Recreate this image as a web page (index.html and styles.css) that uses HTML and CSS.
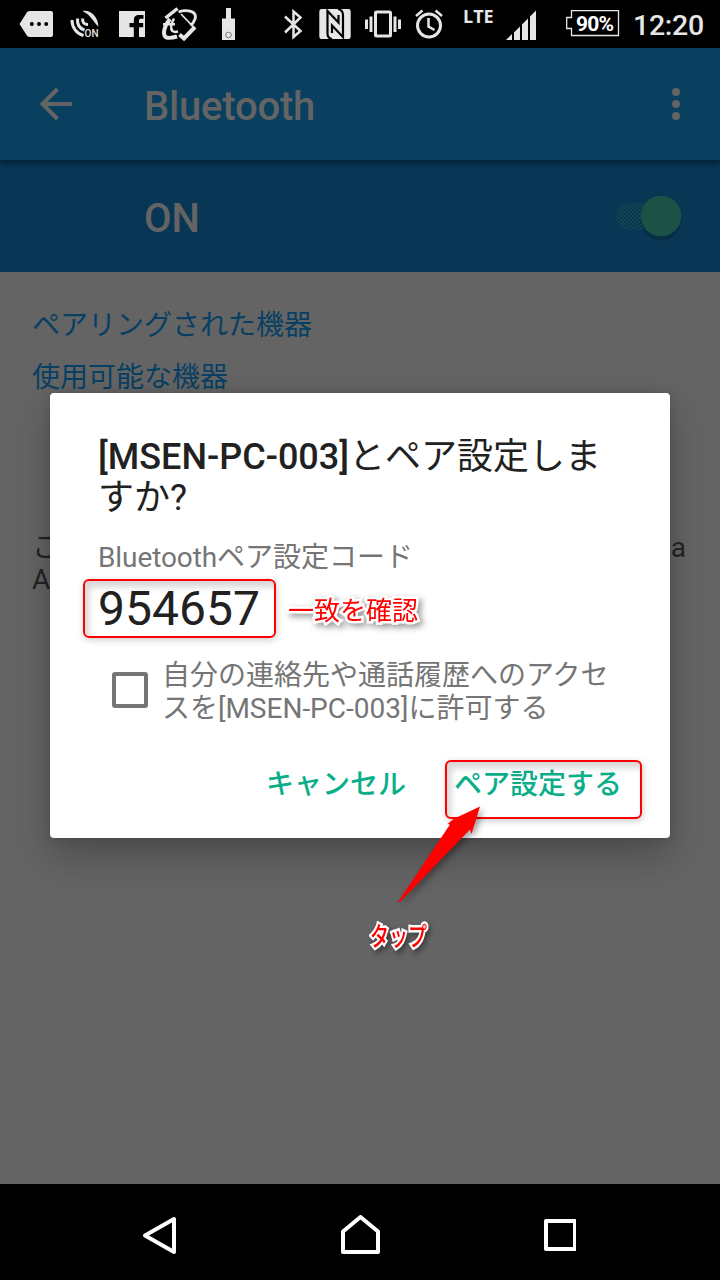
FILE: index.html
```html
<!DOCTYPE html>
<html lang="ja">
<head>
<meta charset="utf-8">
<title>Bluetooth</title>
<link rel="stylesheet" href="styles.css">
</head>
<body>
<div class="phone">
  <header class="status">
    <svg class="ic i-msg" width="34" height="48" viewBox="19 0 34 48"><path d="M19.500 24L27 12.200Q28 11 30 11H51Q53 11 53 13V35Q53 37 51 37H30Q28 37 27 35.800Z"/><g class="ink"><circle cx="31.800" cy="24" r="2"/><circle cx="39" cy="24" r="2"/><circle cx="46.200" cy="24" r="2"/></g></svg>
    <svg class="ic i-sat" width="30" height="48" viewBox="70 0 30 48"><path d="M82.500 11C89 9 98 15.500 98.500 26.500C94 23 91 15 82.500 11Z"/><g class="line w3"><path d="M72 20C72 27 76 33.500 83.500 35.500"/><path d="M77.500 18.500C77 24.500 79.500 28.500 84.500 30"/><path d="M82.800 18.500C82 22 84 24.800 88 24.500"/></g><text class="on" x="84.500" y="36.800" textLength="14" lengthAdjust="spacingAndGlyphs">ON</text></svg>
    <svg class="ic i-fb" width="26" height="48" viewBox="119 0 26 48"><path d="M119 11H145V37H139V27.300H143.200V23H139V20.300Q139 18.800 140.500 18.800H143.500V15H139Q133.800 15 133.800 20V23H129.500V27.300H133.800V37H119Z"/></svg>
    <svg class="ic i-rot" width="36" height="48" viewBox="162 0 36 48"><g class="line"><path stroke-width="3.500" d="M165.500 18L177.500 8.500"/><path stroke-width="1.800" d="M181 14L194.500 28"/><path stroke-width="2.800" d="M178.500 12C187 9 197.500 11 195 19C194 22 192.500 24 190.500 25.500"/><path stroke-width="4" d="M195 27L184 38.500L179.500 34.500"/><path stroke-width="4" d="M170 19C163.500 27 162.500 35 166 37.200C169 38.800 172 38 177 36.500"/><path stroke-width="2.500" d="M174 18.500C170.500 25 170.500 29 172.500 31Q174.500 32.500 178 31.500M163 24.200H175"/></g></svg>
    <svg class="ic i-tool" width="14" height="48" viewBox="222 0 14 48"><path d="M226 8H231V18.500H235V40H222V18.500H226Z"/><circle class="toolhole" cx="228.500" cy="35" r="2.800"/></svg>
    <svg class="ic i-bt" width="19" height="48" viewBox="284 0 19 48"><path class="line" stroke-width="2.500" d="M285 16.500L300.500 31L293.500 37V11.500L300.500 17.500L285 32.500"/></svg>
    <svg class="ic i-nfc" width="32" height="48" viewBox="319 0 32 48"><path d="M321.500 9H348.500Q350.700 9 350.700 12V36Q350.700 39 348.500 39H321.500Q319.300 39 319.300 36V12Q319.300 9 321.500 9Z"/><g class="nfcline"><path d="M332 39Q327.500 38 327.500 34V11L338.500 22.500V15"/><path d="M332 33V25.500L343 37V15Q343 10 338 9"/></g></svg>
    <svg class="ic i-vib" width="36" height="48" viewBox="365 0 36 48"><path fill-rule="evenodd" d="M374 13Q374 10.500 376.500 10.500H389.500Q392 10.500 392 13V35Q392 37.500 389.500 37.500H376.500Q374 37.500 374 35ZM377 13.500V34.500H389V13.500Z"/><path d="M365 19.500H368V29H365ZM369.500 16.500H372.500V32H369.500ZM393.500 16.500H396.500V32H393.500ZM398 19.500H401V29H398Z"/></svg>
    <svg class="ic i-alarm" width="28" height="48" viewBox="415 0 28 48"><g class="line"><circle cx="429" cy="25.500" r="11.500" stroke-width="3"/><path stroke-width="2.500" d="M428.500 18V26.500L434.500 30M416 16L422.500 10.500M435.500 10.500L442 16"/></g></svg>
    <span class="lte">LTE</span>
    <svg class="ic i-sig" width="30" height="48" viewBox="506 0 30 48"><path d="M506 40L512 34V40ZM514 32.500L520 26.500V40H514ZM522 24.500L528 18.500V40H522ZM530 16.500L536 10.500V40H530Z"/></svg>
    <div class="battery">
      <svg class="ic" width="54" height="48" viewBox="566 0 54 48"><path class="line" stroke-width="1.300" d="M571.500 10.700H618.500V35.500H571.500V28.500H566.700V17.500H571.500Z"/></svg>
      <span class="pct">90%</span>
    </div>
    <span class="clock">12:20</span>
  </header>

  <div class="appbar">
    <svg class="back" width="34" height="34" viewBox="39 87 34 34"><path d="M72 104H43M57.500 89L42.500 104L57.500 119"/></svg>
    <h1 class="title">Bluetooth</h1>
    <svg class="more" width="8" height="34" viewBox="672 87 8 34"><circle cx="676" cy="92" r="4"/><circle cx="676" cy="104" r="4"/><circle cx="676" cy="116" r="4"/></svg>
  </div>

  <div class="switchbar">
    <span class="title">ON</span>
    <svg class="toggle" width="68" height="50" viewBox="616 191 68 50">
      <defs><pattern id="grain" width="4" height="4" patternUnits="userSpaceOnUse"><path fill="#1c5146" d="M0 0h1v1h-1zM2 1h1v1h-1zM1 3h1v1h-1zM3 2h1v1h-1z"/></pattern></defs>
      <rect x="616" y="203" width="64" height="27" rx="13.500" fill="url(#grain)"/>
      <circle cx="661" cy="220" r="20.500" fill="#062e49"/>
      <circle cx="661" cy="216" r="20.300" fill="#1c5146"/>
    </svg>
  </div>

  <main class="content">
    <h2 class="section">ペアリングされた機器</h2>
    <h2 class="section">使用可能な機器</h2>
    <div class="note">
      <div class="note-row"><span>こ</span><span>a</span></div>
      <div class="note-row"><span>A</span></div>
    </div>
  </main>

  <nav class="navbar">
    <svg width="36" height="40" viewBox="142 1215 36 40"><path d="M174 1219V1252L145 1235.500Z"/></svg>
    <svg width="40" height="40" viewBox="340 1215 40 40"><path d="M343 1252V1231.500L360.500 1217L378 1231.500V1252Z"/></svg>
    <svg width="34" height="40" viewBox="542 1215 34 40"><path d="M546 1221H575V1249H546Z"/></svg>
  </nav>

  <section class="dialog">
    <h3 class="question"><span class="strong">[MSEN-PC-003]</span>とペア設定しますか?</h3>
    <p class="label"><span class="fit">Bluetooth</span>ペア設定コード</p>
    <p class="code">954657</p>
    <div class="consent"><span class="box"></span><p class="consent-text">自分の連絡先や通話履歴へのアクセスを[MSEN-PC-003]に許可する</p></div>
    <div class="actions"><span>キャンセル</span><span>ペア設定する</span></div>
  </section>

  <div class="frame frame-code"></div>
  <div class="frame frame-pair"></div>
  <span class="mark mark-check">一致を確認</span>
  <svg class="arrow" width="100" height="110" viewBox="390 800 100 110"><path d="M398 902L450 824.500L447.500 824L453.500 819L480 806.500L471.500 834L470 829.500L400 902Z"/></svg>
  <span class="mark mark-tap">タップ</span>
</div>
</body>
</html>
```
FILE: styles.css
```css
* { box-sizing: border-box; }
body { margin: 0; font-family: Roboto, "Noto Sans CJK JP", sans-serif; }
h1, h2, h3, p { margin: 0; font-weight: 400; }
svg { display: block; flex: none; }

.phone { position: relative; width: 720px; height: 1280px; display: flex; flex-direction: column; overflow: hidden; background: #646464; }

.status { height: 48px; flex: none; display: flex; padding-left: 19px; background: #000; color: #e6e6e6; white-space: nowrap; }
.ic { fill: #e6e6e6; }
.ic .line, .ic.line { fill: none; stroke: #e6e6e6; }
.ic .w3 { stroke-width: 3; }
.ic .ink { fill: #000; }
.on { font: 500 11.500px Roboto, sans-serif; }
.toolhole { fill: none; stroke: #777; stroke-width: 1; }
.nfcline { fill: none; stroke: #000; stroke-width: 2.200; }
.i-sat { margin-left: 17px; }
.i-fb { margin-left: 19px; }
.i-rot { margin-left: 17px; }
.i-tool { margin-left: 24px; }
.i-bt { margin-left: 48px; }
.i-nfc { margin-left: 16px; }
.i-vib { margin-left: 14px; }
.i-alarm { margin-left: 14px; }
.lte { width: 30px; margin-left: 20px; padding-top: 6px; font: 700 18px/20px "Open Sans", sans-serif; }
.i-sig { margin-left: 13px; }
.battery { position: relative; margin-left: 30px; }
.pct { position: absolute; left: 10px; top: 12px; font-size: 21px; line-height: 24px; font-weight: 700; letter-spacing: -.8px; color: #fff; }
.clock { margin-left: 13px; padding-top: 9px; font-size: 28.500px; line-height: 34px; letter-spacing: -.3px; font-weight: 500; }

.appbar { position: relative; height: 112px; flex: none; display: flex; align-items: center; padding: 0 40px 0 39px; background: #093f5f; box-shadow: 0 4px 4px rgba(4, 36, 56, .9); }
.title { flex: 1; font-size: 40px; line-height: 48px; font-weight: 500; color: #646464; }
.appbar .title { margin-left: 71px; padding-top: 6px; letter-spacing: -.2px; }
.back { fill: none; stroke: #646464; stroke-width: 4; }
.more { fill: #646464; }
.switchbar { height: 112px; flex: none; display: flex; align-items: center; padding: 0 36px 0 144px; background: #093654; }
.switchbar .title { padding-top: 6px; }

.content { flex: 1; padding: 28px 34px 0 32px; }
.section { height: 52px; font-size: 28px; line-height: 52px; color: #093f62; }
.note { padding-top: 128px; font-size: 28px; line-height: 32px; color: #232323; }
.note-row { display: flex; justify-content: space-between; height: 32px; }

.navbar { height: 96px; flex: none; display: flex; padding: 31px 0 0 142px; gap: 162px; background: #000; fill: none; stroke: #fff; stroke-width: 4; stroke-linejoin: round; }

.dialog { position: absolute; left: 50px; top: 393px; width: 620px; height: 445px; padding: 44px 48px 0; border-radius: 4px; background: #fff; color: #212121; box-shadow: 0 18px 36px rgba(0, 0, 0, .24), 0 0 10px rgba(0, 0, 0, .14); }
.question { font-size: 36px; line-height: 41px; }
.strong { font-weight: 500; }
.label { margin-top: 22px; font-size: 28px; line-height: 33px; color: #757575; }
.fit { letter-spacing: -.1px; }
.code { margin-top: 7px; font-size: 48px; line-height: 56px; }
.consent { display: flex; margin: 22px 0 0 14px; color: #757575; }
.box { flex: none; width: 36px; height: 36px; margin-top: 13px; border: 4px solid #757575; border-radius: 3px; }
.consent-text { width: 456px; margin-left: 14px; font-size: 28px; line-height: 33px; }
.actions { display: flex; justify-content: flex-end; gap: 48px; margin: 43px 0 0 0; font-size: 28px; line-height: 34px; color: #0aae89; font-weight: 500; }

.frame { position: absolute; border: 2px solid #f00; border-radius: 6px; box-shadow: 1px 2px 7px rgba(0, 0, 0, .2), inset 4px 6px 7px rgba(0, 0, 0, .16); }
.frame-code { left: 83px; top: 579px; width: 193px; height: 59px; }
.frame-pair { left: 445px; top: 760px; width: 197px; height: 59px; }
.mark { position: absolute; font-family: "Noto Sans CJK JP", sans-serif; font-size: 26px; line-height: 36px; font-weight: 400; white-space: nowrap; color: #f00; -webkit-text-stroke: 5px #fff; paint-order: stroke fill; filter: drop-shadow(3px 3px 3px rgba(0, 0, 0, .4)); }
.mark-check { left: 288px; top: 591px; }
.mark-tap { left: 370px; top: 917px; transform: scaleX(.73); transform-origin: left; font-weight: 500; }
.arrow { position: absolute; left: 390px; top: 800px; fill: #f00; filter: drop-shadow(3px 3px 3px rgba(0, 0, 0, .35)); }
```
